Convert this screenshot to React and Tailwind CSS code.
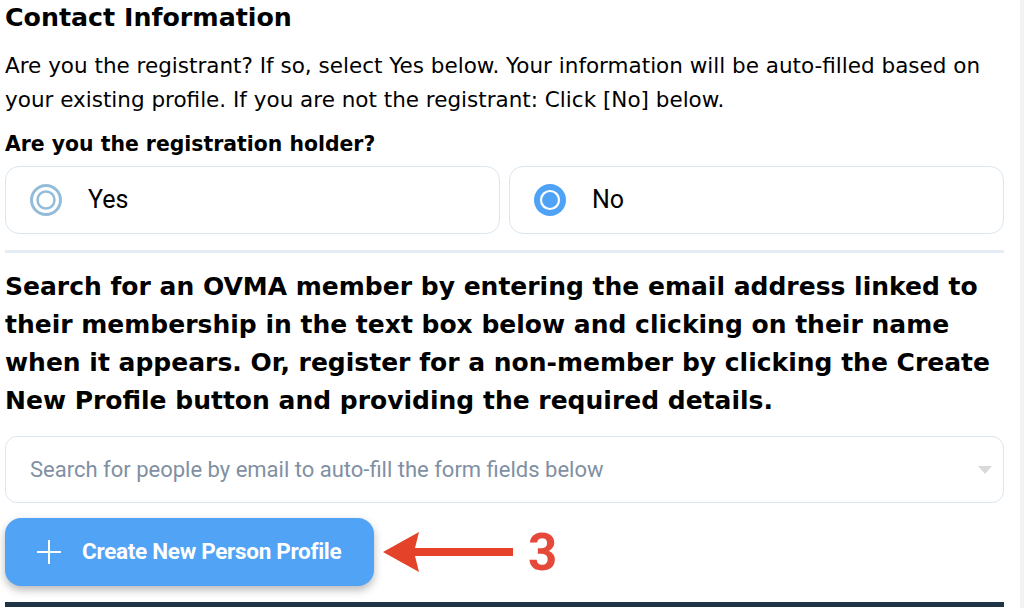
function Radio({ checked }) {
  if (checked) {
    return (
      <svg width="34" height="34" viewBox="0 0 34 34">
        <circle cx="17" cy="17" r="16" fill="#4fa3f7" />
        <circle cx="17" cy="17" r="9" fill="#4fa3f7" stroke="#ffffff" strokeWidth="2.2" />
      </svg>
    );
  }
  return (
    <svg width="34" height="34" viewBox="0 0 34 34">
      <circle cx="17" cy="17" r="14.5" fill="none" stroke="#93bcd9" strokeWidth="3" />
      <circle cx="17" cy="17" r="8.5" fill="none" stroke="#93bcd9" strokeWidth="2.5" />
    </svg>
  );
}

function Option({ label, checked }) {
  return (
    <div className="flex-1 h-[68px] rounded-[14px] border-[1.5px] border-[#dbe6f0] flex items-center pl-[23px]">
      <Radio checked={checked} />
      <span className="ml-[25px] text-[25px] text-black font-['Roboto',sans-serif]">{label}</span>
    </div>
  );
}

export default function App() {
  const sans = "font-['DejaVu_Sans',sans-serif]";
  return (
    <div className="h-[608px] w-[1024px] overflow-hidden bg-white flex">
      <div className={`w-[999px] ml-[5px] ${sans} text-black`}>
        <h2 className="pt-[2px] text-[25.3px] leading-[32px] font-bold whitespace-nowrap">Contact Information</h2>
        <p className="mt-[15px] text-[21.5px] leading-[34px] whitespace-nowrap">
          Are you the registrant? If so, select Yes below. Your information will be auto-filled based on
          <br />
          your existing profile. If you are not the registrant: Click [No] below.
        </p>
        <h3 className="mt-[12px] text-[20.4px] leading-[30px] font-bold whitespace-nowrap">Are you the registration holder?</h3>

        <div className="mt-[7px] flex gap-[9px]">
          <Option label="Yes" />
          <Option label="No" checked />
        </div>

        <div className="mt-[16px] h-[3px] bg-[#e4edf5]" />

        <p className="mt-[15px] text-[25px] leading-[38px] font-bold whitespace-nowrap">
          Search for an OVMA member by entering the email address linked to
          <br />
          their membership in the text box below and clicking on their name
          <br />
          when it appears. Or, register for a non-member by clicking the Create
          <br />
          New Profile button and providing the required details.
        </p>

        <div className="mt-[16px] h-[67px] rounded-[12px] border-[1.5px] border-[#dbe6f0] flex items-center pl-[24px] pr-[10px]">
          <span className="flex-1 text-[22px] text-[#7f90a3] font-['Roboto',sans-serif]">
            Search for people by email to auto-fill the form fields below
          </span>
          <svg width="16" height="10" viewBox="0 0 16 10">
            <path d="M1 1 L15 1 L8 9 Z" fill="#d9d9d9" />
          </svg>
        </div>

        <div className="mt-[15px] flex items-center">
          <button className="h-[68px] w-[369px] rounded-[16px] bg-[#51a3f6] shadow-[0_4px_8px_rgba(0,0,0,0.28)] flex items-center pl-[31px] text-white font-['Roboto',sans-serif] font-bold text-[22.5px]">
            <svg width="26" height="26" viewBox="0 0 26 26">
              <path d="M13 1 V25 M1 13 H25" stroke="#ffffff" strokeWidth="2" />
            </svg>
            <span className="ml-[20px] tracking-[-0.3px]">Create New Person Profile</span>
          </button>
          <svg width="132" height="44" viewBox="0 0 132 44" className="ml-[9px]">
            <path d="M0 22 L36 2 L32 18 L130 18 L130 26 L32 26 L36 42 Z" fill="#e4432a" />
          </svg>
          <span className="ml-[13px] text-[51px] leading-none font-bold text-[#e5493a] font-['Roboto',sans-serif]">3</span>
        </div>

        <div className="mt-[16px] h-[5px] bg-[#1f3447]" />
      </div>
      <div className="flex-1" />
      <div className="w-[4px] bg-[#f3f3f3]" />
    </div>
  );
}
